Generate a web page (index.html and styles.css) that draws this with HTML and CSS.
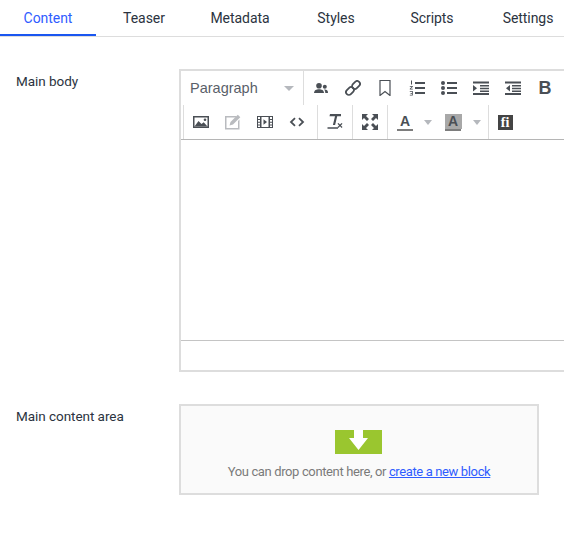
FILE: index.html
```html
<!DOCTYPE html>
<html lang="en">
<head>
<meta charset="utf-8">
<title>Content</title>
<link rel="stylesheet" href="styles.css">
</head>
<body>
<nav class="tabs">
  <a class="tab active">Content</a>
  <a class="tab">Teaser</a>
  <a class="tab">Metadata</a>
  <a class="tab">Styles</a>
  <a class="tab">Scripts</a>
  <a class="tab">Settings</a>
</nav>
<main class="form">
  <section class="row body-row">
    <div class="label">Main body</div>
    <div class="editor">
      <div class="toolbar">
        <div class="tool-row first">
          <div class="format"><span>Paragraph</span><i class="caret"></i></div>
          <div class="group">
            <button class="btn"><svg viewBox="0 0 16 16"><circle cx="6" cy="5.800" r="2.800"/><path d="M1 13c.2-3 2.300-3.800 5-3.800s4.800.8 5 3.800z"/><circle cx="11.800" cy="6.800" r="2"/><path d="M12.300 13c0-1.500-.4-2.700-1.400-3.400 2.300-.3 4.200.5 4.100 3.400z"/></svg></button>
            <button class="btn"><svg viewBox="0 0 16 16" class="line"><rect x="0.600" y="8.200" width="8.800" height="5.600" rx="2.800" transform="rotate(-45 5 11)"/><rect x="6.600" y="2.200" width="8.800" height="5.600" rx="2.800" transform="rotate(-45 11 5)"/></svg></button>
            <button class="btn"><svg viewBox="0 0 16 16" class="line thin"><path d="M3 .5h10v15l-5-4-5 4z"/></svg></button>
            <button class="btn"><svg viewBox="0 0 16 16"><path d="M6 2h10v2H6zM6 7h10v2H6zM6 12h10v2H6z"/><path d="M2 .5h1v4H2zM.8 6h3v.8l-2 1.900h2v.8h-3v-.8l2-1.900h-2zM.8 11h3v4.500h-3v-.8h2.200v-1h-1.500v-.8h1.500v-1.100h-2.200z"/></svg></button>
            <button class="btn"><svg viewBox="0 0 16 16"><circle cx="2" cy="3" r="2"/><circle cx="2" cy="8" r="2"/><circle cx="2" cy="13" r="2"/><path d="M6 2h10v2H6zM6 7h10v2H6zM6 12h10v2H6z"/></svg></button>
            <button class="btn"><svg viewBox="0 0 16 16"><path d="M0 1.500h16v2H0zM7 5h9v1.500H7zM7 7.700h9v1.500H7zM7 10.400h9v1.500H7zM0 13h16v2H0zM0 5l4 3.200-4 3.200z"/></svg></button>
            <button class="btn"><svg viewBox="0 0 16 16"><path d="M0 1.500h16v2H0zM7 5h9v1.500H7zM7 7.700h9v1.500H7zM7 10.400h9v1.500H7zM0 13h16v2H0zM5 5L1 8.200l4 3.200z"/></svg></button>
            <button class="btn"><span class="bold">B</span></button>
          </div>
        </div>
        <div class="tool-row second">
          <div class="group lead">
            <button class="btn"><svg viewBox="0 0 16 16"><path fill-rule="evenodd" d="M0 2h16v12H0zM1.500 3.500v9h13v-9z"/><path d="M1.500 12.500l4-5.500 3 3 2.200-1.800 3.800 4.300z"/><circle cx="12" cy="5.800" r="1.300"/></svg></button>
            <button class="btn"><svg viewBox="0 0 16 16" class="muted"><path fill-rule="evenodd" d="M0 2h12l-1.500 1.500H1.500v10.500h11.500V7L14.500 5.500V15.500H0z"/><path d="M4.500 11.500l1-3.500L12.800.7 15.300 3.200 8 10.500z"/></svg></button>
            <button class="btn"><svg viewBox="0 0 16 16"><path fill-rule="evenodd" d="M0 2h16v12H0zM1 3v2h2V3zM1 6v1.800h2V6zM1 8.800v1.800h2V8.800zM1 11.500V13h2v-1.500zM13 3v2h2V3zM13 6v1.800h2V6zM13 8.800v1.800h2V8.800zM13 11.500V13h2v-1.500zM4.500 3v10h7V3z"/><path d="M6.500 5.200l3.500 2.800-3.500 2.800z"/></svg></button>
            <button class="btn"><svg viewBox="0 0 16 16" class="line"><path d="M6 4.200L2 8l4 3.800M10 4.200L14 8l-4 3.800"/></svg></button>
          </div>
          <div class="group narrow">
            <button class="btn"><svg viewBox="0 0 16 16"><path d="M3 0h11v2.200H10.200L8.100 11H5.900L8 2.200H5L2.500 2.200zM.5 13.200h10.500v1.600H.5z"/><path d="M10.500 9.800l.9-.9 1.600 1.600 1.600-1.600.9.9-1.600 1.600 1.600 1.600-.9.9-1.600-1.600-1.600 1.600-.9-.9 1.600-1.600z"/></svg></button>
          </div>
          <div class="group narrow">
            <button class="btn"><svg viewBox="0 0 16 16"><path d="M0 0h6L4 2l3 3-2 2-3-3-2 2zM16 0v6l-2-2-3 3-2-2 3-3-2-2zM0 16v-6l2 2 3-3 2 2-3 3 2 2zM16 16h-6l2-2-3-3 2-2 3 3 2-2z"/></svg></button>
          </div>
          <div class="group">
            <button class="btn color"><span class="glyph">A</span><i class="rule"></i></button><i class="caret small"></i>
            <button class="btn color shaded"><span class="glyph shade">A</span><i class="rule"></i></button><i class="caret small late"></i>
          </div>
          <div class="group">
            <button class="btn"><span class="ligature">fi</span></button>
          </div>
        </div>
      </div>
      <div class="content"></div>
      <div class="status"></div>
    </div>
  </section>
  <section class="row">
    <div class="label">Main content area</div>
    <div class="drop">
      <div class="arrow-box"><svg viewBox="0 0 47 24"><path d="M19 0h9v8h5L23.500 20 14 8h5z"/></svg></div>
      <p class="hint">You can drop content here, or <a class="new">create a new block</a></p>
    </div>
  </section>
</main>
</body>
</html>
```
FILE: styles.css
```css
html, body { margin: 0; padding: 0; }
body {
  width: 564px;
  height: 540px;
  overflow: hidden;
  background: #fff;
  font-family: Roboto, "Liberation Sans", sans-serif;
  font-size: 14px;
  color: #2b3340;
}
.tabs {
  display: flex;
  width: 564px;
  height: 36px;
  overflow: hidden;
  border-bottom: 1px solid #ddd;
}
.tab {
  flex: 0 0 96px;
  height: 36px;
  box-sizing: border-box;
  padding-top: 10px;
  line-height: 17px;
  text-align: center;
  letter-spacing: -0.05px;
}
.tab.active {
  color: #2f5cff;
  border-bottom: 2px solid #1a56f0;
}
.form { padding: 32px 0 0 16px; }
.row { display: flex; }
.body-row { margin-bottom: 32px; }
.label {
  flex: 0 0 163px;
  padding-top: 4px;
  font-size: 13.5px;
  line-height: 17px;
  letter-spacing: -0.05px;
}
.editor {
  flex: none;
  width: 385px;
  height: 303px;
  box-sizing: border-box;
  border: 2px solid #ddd;
  border-right: 0;
  display: flex;
  flex-direction: column;
}
.toolbar { height: 68px; border-bottom: 1px solid #b5b5b5; }
.tool-row { display: flex; height: 34px; }
.format {
  flex: 0 0 123px;
  box-sizing: border-box;
  border-right: 1px solid #ddd;
  padding: 0 4px 0 9px;
  display: flex;
  align-items: center;
  justify-content: space-between;
  font-family: "Liberation Sans", Arial, sans-serif;
  font-size: 14.5px;
  color: #5a5f6a;
}
.format .caret { margin-right: 5px; }
.caret {
  display: block;
  width: 0;
  height: 0;
  border-left: 5px solid transparent;
  border-right: 5px solid transparent;
  border-top: 5px solid #b5b8bd;
}
.group { display: flex; align-items: center; }
.first .group { padding-left: 1px; }
.btn {
  flex: none;
  width: 32px;
  height: 34px;
  padding: 0;
  border: 0;
  background: none;
  display: flex;
  align-items: center;
  justify-content: center;
  color: #4a4f55;
}
.btn svg { width: 16px; height: 16px; fill: #4a4f55; display: block; }
.btn svg.line { fill: none; stroke: #4a4f55; stroke-width: 1.800; }
.btn svg.line.thin { stroke-width: 1.200; }
.btn svg.muted { fill: #b9bbbf; }
.bold { font: 700 18px "Liberation Sans", Arial, sans-serif; }
.second { padding-left: 2px; }
.second .group { border-left: 1px solid #ddd; height: 34px; box-sizing: border-box; }
.second .group.narrow .btn { width: 34px; }
.second .lead { width: 134px; padding-left: 1px; box-sizing: border-box; }
.btn.color { width: 24px; margin-left: 5px; flex-direction: column; }
.btn.color.shaded { margin-left: 3px; }
.glyph {
  display: block;
  width: 17px;
  height: 15px;
  text-align: center;
  font: 700 14px/15px "Liberation Sans", Arial, sans-serif;
}
.glyph.shade { background: #a8a8a8; }
.rule { display: block; width: 16px; height: 2px; background: #7d7d7d; }
.caret.small { margin: 0 6px 0 7px; border-left-width: 4.500px; border-right-width: 4.500px; }
.caret.small.late { margin: 0 7px 0 8px; }
.ligature {
  display: block;
  width: 15px;
  height: 15px;
  background: #444;
  color: #fff;
  font: 700 14px/15px "Liberation Serif", serif;
  font-variant-ligatures: none;
  text-align: center;
}
.content { flex: 1; }
.status { height: 29px; border-top: 1px solid #c4c4c4; }
.drop {
  flex: none;
  width: 360px;
  height: 91px;
  box-sizing: border-box;
  border: 2px solid #ddd;
  background: #fafafa;
  padding-top: 24px;
  text-align: center;
}
.arrow-box {
  width: 47px;
  height: 24px;
  margin: 0 0 0 154px;
  background: #9ac62f;
}
.arrow-box svg { display: block; width: 47px; height: 24px; fill: #fff; }
.hint {
  margin: 9px 0 0;
  line-height: 17px;
  font-size: 13px;
  color: #7a7a7a;
  letter-spacing: -0.37px;
}
.new { color: #2f5cff; text-decoration: underline; }
```
